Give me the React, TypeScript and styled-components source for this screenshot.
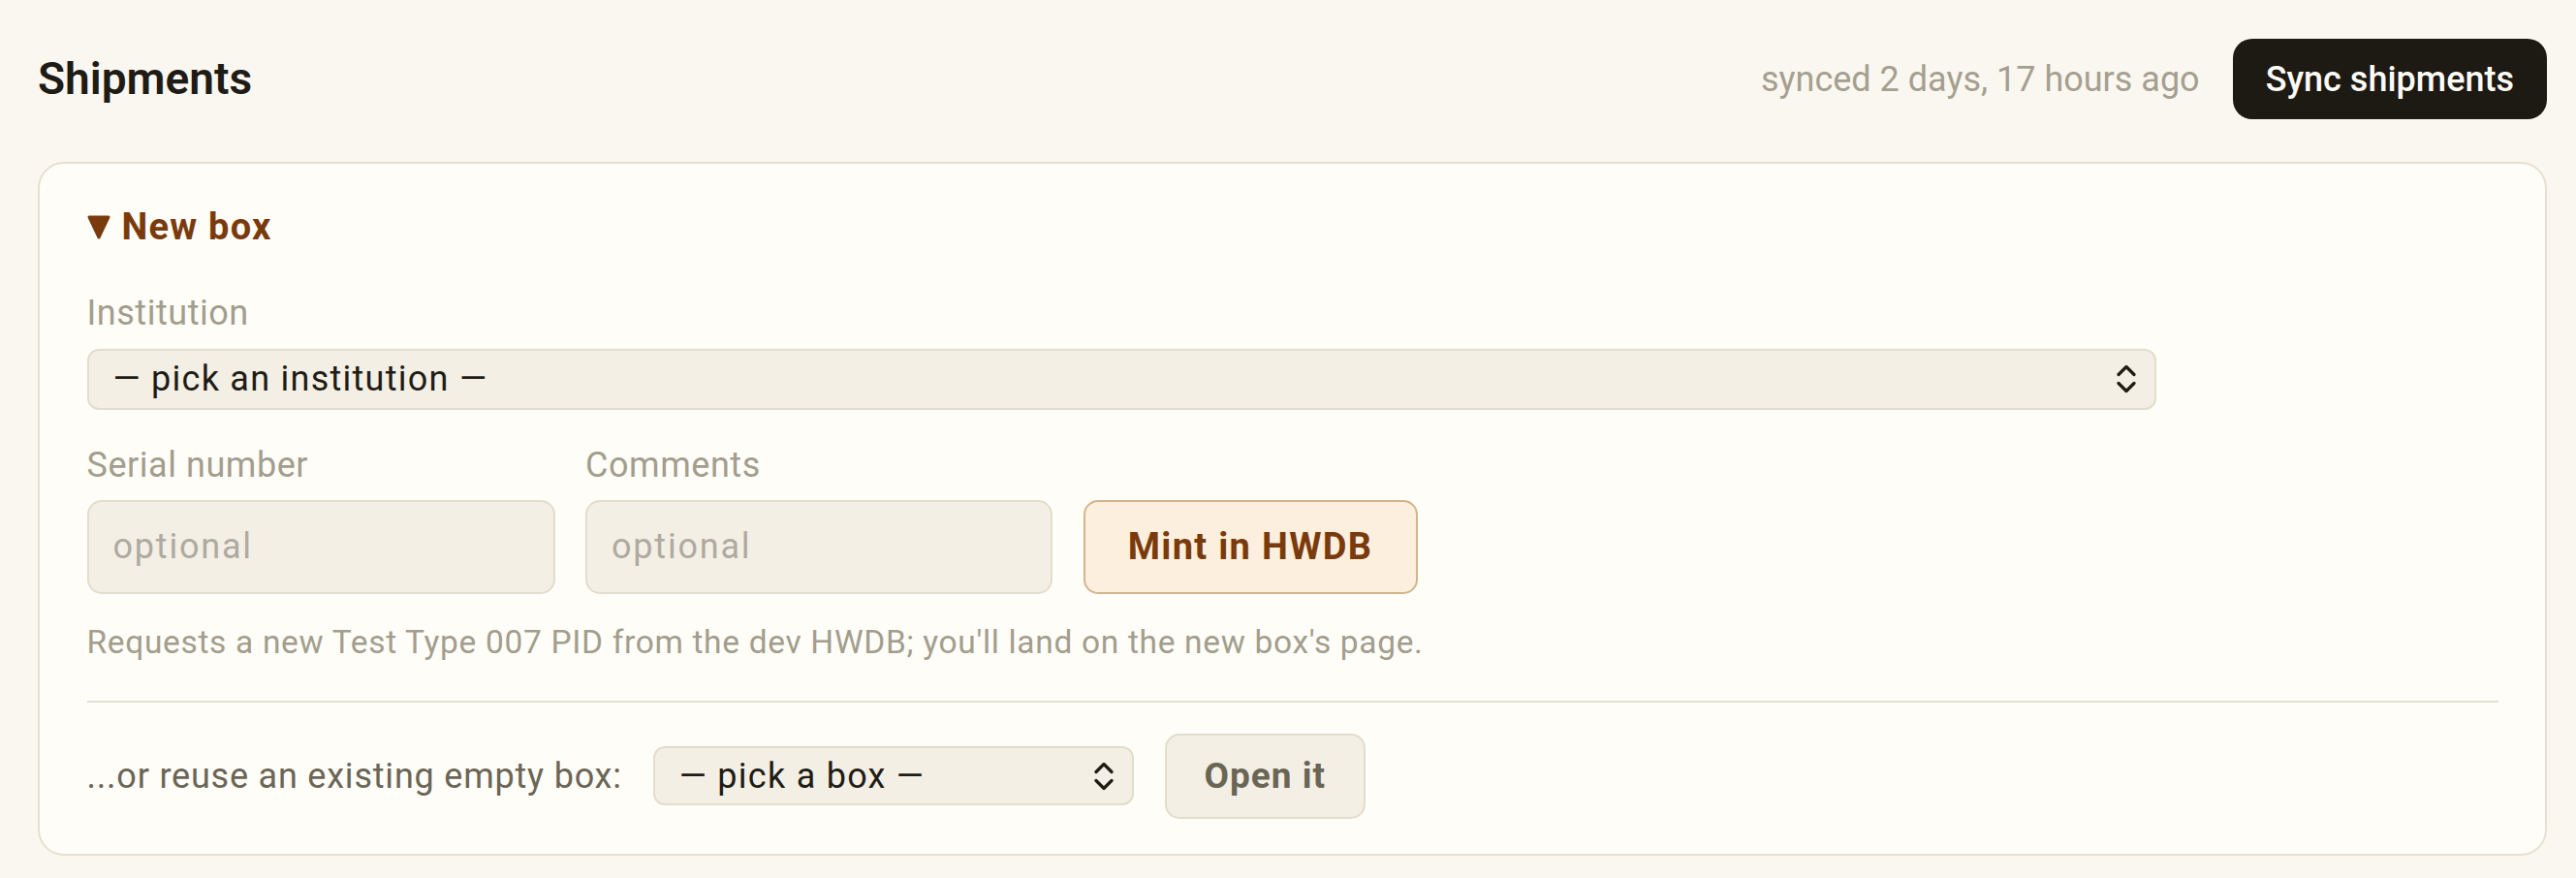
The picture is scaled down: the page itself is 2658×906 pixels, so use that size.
import React from "react";
import styled, { createGlobalStyle } from "styled-components";

const Global = createGlobalStyle`
  html, body { margin: 0; padding: 0; }
  body {
    background: #faf7f0;
    font-family: Roboto, "Liberation Sans", sans-serif;
    color: #1f1c16;
  }
  * { box-sizing: border-box; }
`;

const Page = styled.div`
  padding: 40px 30px 20px 39px;
`;

const Header = styled.header`
  display: flex;
  align-items: center;
  justify-content: space-between;
  height: 83px;
`;

const Title = styled.h1`
  margin: 0;
  font-size: 46px;
  font-weight: 600;
  line-height: 1.2;
  color: #1f1c16;
`;

const HeaderRight = styled.div`
  display: flex;
  align-items: center;
  gap: 34px;
`;

const SyncedText = styled.span`
  font-size: 36px;
  color: #a59f8f;
`;

const DarkButton = styled.button`
  height: 83px;
  padding: 0 34px;
  border: none;
  border-radius: 20px;
  background: #1d1a14;
  color: #fdfbf5;
  font-family: Roboto, "Liberation Sans", sans-serif;
  font-size: 36px;
  font-weight: 500;
  cursor: pointer;
`;

const Card = styled.section`
  margin-top: 44px;
  border: 2.5px solid #e5e0cf;
  border-radius: 27px;
  background: #fefdf8;
  padding: 43px 48.5px 36.5px;
  display: flex;
  flex-direction: column;
`;

const Summary = styled.div`
  display: flex;
  align-items: center;
  gap: 12px;
  font-size: 38px;
  font-weight: 700;
  letter-spacing: 0.032em;
  line-height: 45.6px;
  color: #7a3b0c;
`;

const Label = styled.label`
  display: block;
  font-size: 36px;
  letter-spacing: 0.015em;
  line-height: 46.8px;
  color: #a39d8d;
`;

const FieldBlock = styled.div<{ $top: number }>`
  display: flex;
  flex-direction: column;
  gap: 12.5px;
  margin-top: ${(p) => p.$top}px;
`;

const SelectWrap = styled.div<{ $w: number; $h: number }>`
  position: relative;
  width: ${(p) => p.$w}px;
  height: ${(p) => p.$h}px;
  flex: none;
`;

const Select = styled.select`
  appearance: none;
  -webkit-appearance: none;
  width: 100%;
  height: 100%;
  padding: 0 60px 0 25px;
  border: 2.5px solid #e2ddcc;
  border-radius: 12px;
  background: #f3efe4;
  color: #1f1c16;
  font-family: Roboto, "Liberation Sans", sans-serif;
  font-size: 36px;
  letter-spacing: 0.035em;
  outline: none;
`;

const Chevron = styled.svg`
  position: absolute;
  right: 21px;
  top: 50%;
  transform: translateY(-50%);
  pointer-events: none;
`;

const Row = styled.div<{ $top: number; $align?: string; $gap: number }>`
  display: flex;
  align-items: ${(p) => p.$align || "center"};
  gap: ${(p) => p.$gap}px;
  margin-top: ${(p) => p.$top}px;
`;

const Field = styled.div`
  display: flex;
  flex-direction: column;
  gap: 12px;
`;

const Input = styled.input<{ $w: number }>`
  width: ${(p) => p.$w}px;
  height: 97px;
  padding: 0 25px;
  border: 2.5px solid #e2ddcc;
  border-radius: 15px;
  background: #f3efe4;
  color: #1f1c16;
  font-family: Roboto, "Liberation Sans", sans-serif;
  font-size: 36px;
  letter-spacing: 0.05em;
  outline: none;
  &::placeholder { color: #aeaaa1; }
`;

const MintButton = styled.button`
  height: 97px;
  width: 345px;
  border: 2.5px solid #d3b48c;
  border-radius: 15px;
  background: #fdefdd;
  color: #7a3b0c;
  font-family: Roboto, "Liberation Sans", sans-serif;
  font-size: 38px;
  font-weight: 700;
  letter-spacing: 0.035em;
  cursor: pointer;
`;

const Helper = styled.p`
  margin: 28px 0 0;
  font-size: 33.5px;
  letter-spacing: 0.02em;
  line-height: 44.1px;
  color: #a39d8d;
`;

const Divider = styled.hr`
  margin: 38px 0 0;
  border: none;
  height: 2px;
  background: #e5e0d0;
`;

const ReuseText = styled.span`
  font-size: 36px;
  letter-spacing: 0.022em;
  color: #6b6556;
`;

const GhostButton = styled.button`
  width: 207px;
  height: 88px;
  border: 2.5px solid #e2ddcc;
  border-radius: 15px;
  background: #f3efe4;
  color: #6b6556;
  font-family: Roboto, "Liberation Sans", sans-serif;
  font-size: 37px;
  font-weight: 700;
  letter-spacing: 0.027em;
  cursor: pointer;
`;

const UpDown = () => (
  <Chevron width="20" height="29" viewBox="0 0 20 29" fill="none">
    <path d="M2 10 L10 2 L18 10" stroke="#1f1c16" strokeWidth="3.2" strokeLinecap="round" strokeLinejoin="round" />
    <path d="M2 19 L10 27 L18 19" stroke="#1f1c16" strokeWidth="3.2" strokeLinecap="round" strokeLinejoin="round" />
  </Chevron>
);

const Triangle = () => (
  <svg width="24" height="25" viewBox="0 0 24 25">
    <polygon points="2,2 22,2 12,23" fill="#7a3b0c" stroke="#7a3b0c" strokeWidth="3" strokeLinejoin="round" />
  </svg>
);

export default function App() {
  return (
    <>
      <Global />
      <Page>
        <Header>
          <Title>Shipments</Title>
          <HeaderRight>
            <SyncedText>synced 2 days, 17 hours ago</SyncedText>
            <DarkButton>Sync shipments</DarkButton>
          </HeaderRight>
        </Header>
        <Card>
          <Summary>
            <Triangle />
            <span>New box</span>
          </Summary>
          <FieldBlock $top={42.7}>
            <Label>Institution</Label>
            <SelectWrap $w={2135} $h={63}>
              <Select defaultValue="">
                <option value="">— pick an institution —</option>
              </Select>
              <UpDown />
            </SelectWrap>
          </FieldBlock>
          <Row $top={34.3} $align="flex-end" $gap={31.5}>
            <Field>
              <Label>Serial number</Label>
              <Input $w={483} placeholder="optional" />
            </Field>
            <Field>
              <Label>Comments</Label>
              <Input $w={482} placeholder="optional" />
            </Field>
            <MintButton>Mint in HWDB</MintButton>
          </Row>
          <Helper>
            Requests a new Test Type 007 PID from the dev HWDB; you'll land on the new box's page.
          </Helper>
          <Divider />
          <Row $top={32} $gap={32}>
            <ReuseText>...or reuse an existing empty box:</ReuseText>
            <SelectWrap $w={496} $h={61}>
              <Select defaultValue="">
                <option value="">— pick a box —</option>
              </Select>
              <UpDown />
            </SelectWrap>
            <GhostButton>Open it</GhostButton>
          </Row>
        </Card>
      </Page>
    </>
  );
}
